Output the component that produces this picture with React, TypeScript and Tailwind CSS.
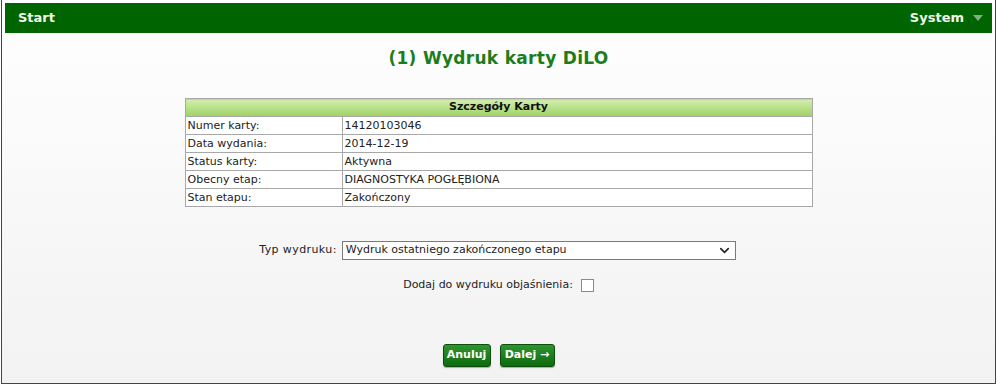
import { ChevronDown } from 'lucide-react';

const rows: [string, string][] = [
  ['Numer karty:', '14120103046'],
  ['Data wydania:', '2014-12-19'],
  ['Status karty:', 'Aktywna'],
  ['Obecny etap:', 'DIAGNOSTYKA POGŁĘBIONA'],
  ['Stan etapu:', 'Zakończony'],
];

export default function App() {
  return (
    <div className="w-[997px] h-[385px] bg-white font-['DejaVu_Sans',Verdana,sans-serif] text-[11px] text-[#222]">
      <div className="ml-px mr-px h-[384px] border-x border-b border-[#0b6e0b] pt-[3px] px-[3px] bg-gradient-to-b from-white to-[#f2f2f2] flex flex-col">
        {/* Top bar */}
        <div className="h-[30px] bg-[#006400] flex items-center justify-between pl-[13px] pr-[9px]">
          <span className="text-[#f0f8e8] font-bold text-[13px]">Start</span>
          <span className="flex items-center gap-[9px]">
            <span className="text-[#f0f8e8] font-bold text-[13px]">System</span>
            <svg width="10" height="6" viewBox="0 0 10 6">
              <path d="M0 0 L10 0 L5 6 Z" fill="#7fb07f" />
            </svg>
          </span>
        </div>

        <h1 className="mt-[15px] text-center text-[17px] leading-[20px] font-bold tracking-[0.3px] text-[#1c7d1c]">
          (1) Wydruk karty DiLO
        </h1>

        {/* Card details */}
        <table className="mt-[30px] mx-auto w-[628px] border-collapse border border-[#a8a8a8]">
          <thead>
            <tr>
              <th
                colSpan={2}
                className="h-[18px] border border-[#a8a8a8] bg-gradient-to-b from-[#d3eeae] to-[#9fd162] text-center font-bold text-[11px] text-[#111]"
              >
                Szczegóły Karty
              </th>
            </tr>
          </thead>
          <tbody>
            {rows.map(([k, v]) => (
              <tr key={k} className="h-[18px] bg-white">
                <td className="w-[157px] border border-[#a8a8a8] pl-[2px] leading-[16px]">{k}</td>
                <td className="border border-[#a8a8a8] pl-[2px] leading-[16px]">{v}</td>
              </tr>
            ))}
          </tbody>
        </table>

        {/* Form */}
        <div className="mt-[34px] flex items-center justify-center gap-[5px] pr-[2px]">
          <span className="tracking-[0.4px]">Typ wydruku:</span>
          <div className="relative w-[394px] h-[19px] border border-[#7a7a7a] bg-white flex items-center pl-[3px]">
            <span>Wydruk ostatniego zakończonego etapu</span>
            <ChevronDown size={15} strokeWidth={2.6} className="absolute right-[3px] top-[1px] text-[#222]" />
          </div>
        </div>

        <div className="mt-[17px] flex items-center justify-center gap-[8px]">
          <span>Dodaj do wydruku objaśnienia:</span>
          <span className="w-[13px] h-[13px] border border-[#8a8a8a] bg-white" />
        </div>

        <div className="mt-[50px] flex justify-center gap-[9px]">
          <button className="h-[23px] w-[48px] rounded-[3px] border border-[#0d4f0d] bg-gradient-to-b from-[#2f952f] to-[#0c6a0c] text-white font-bold text-[11px] shadow-[0_1px_1px_rgba(0,0,0,0.3)]">
            Anuluj
          </button>
          <button className="h-[23px] w-[55px] rounded-[3px] border border-[#0d4f0d] bg-gradient-to-b from-[#2f952f] to-[#0c6a0c] text-white font-bold text-[11px] shadow-[0_1px_1px_rgba(0,0,0,0.3)]">
            Dalej →
          </button>
        </div>
      </div>
    </div>
  );
}
